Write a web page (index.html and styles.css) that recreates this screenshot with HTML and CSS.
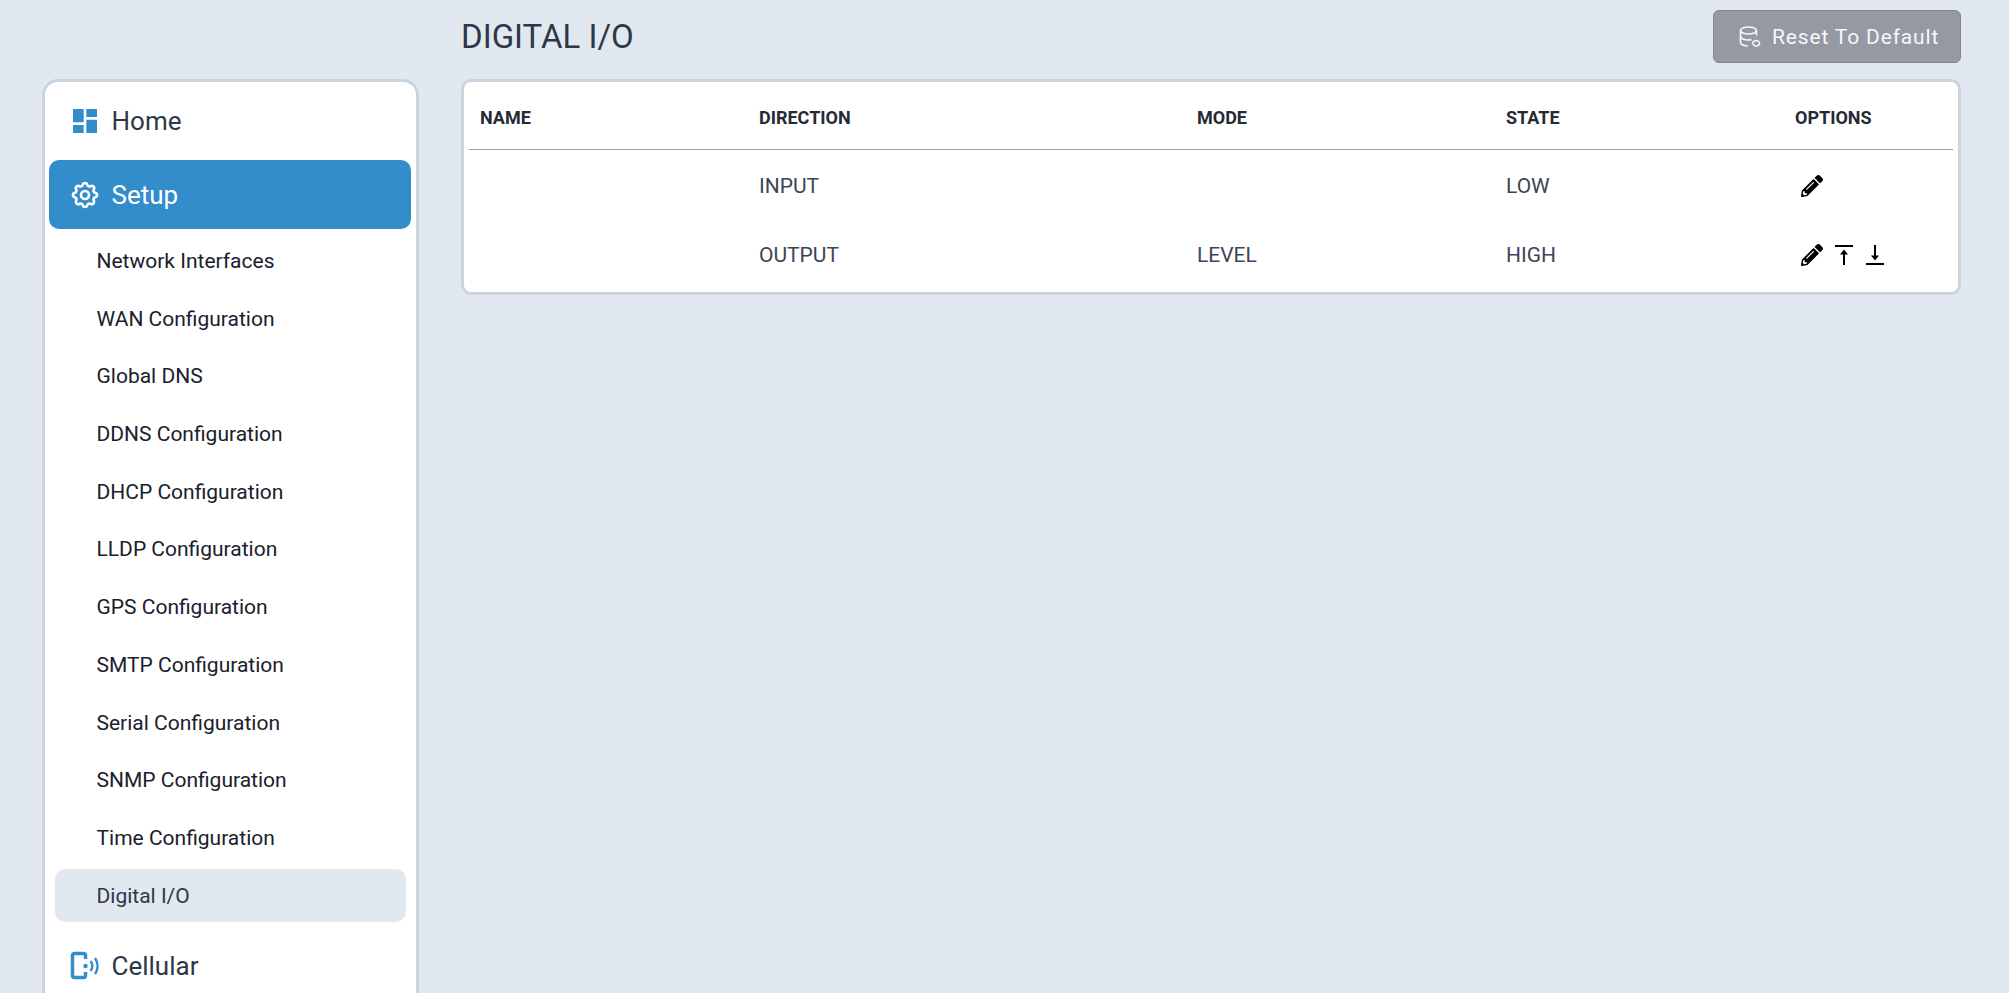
FILE: index.html
```html
<!DOCTYPE html>
<html>
<head>
  <meta charset="UTF-8">
  <title>Digital I/O</title>
  <link rel="stylesheet" href="styles.css">
</head>
<body>
  <div class="page">
    <aside class="sidebar">
      <a class="nav-main" href="#">
        <svg class="nav-icon" viewBox="0 0 24 24" fill="#348dcb"><path d="M3 13h8V3H3v10zm0 8h8v-6H3v6zm10 0h8V11h-8v10zm0-18v6h8V3h-8z"/></svg>
        Home
      </a>
      <a class="nav-main active" href="#">
        <svg class="nav-icon" viewBox="0 0 24 24" fill="none" stroke="#fff" stroke-width="2"><path d="M10.325 4.317c.426-1.756 2.924-1.756 3.35 0a1.724 1.724 0 002.573 1.066c1.543-.94 3.31.826 2.37 2.37a1.724 1.724 0 001.065 2.572c1.756.426 1.756 2.924 0 3.35a1.724 1.724 0 00-1.066 2.573c.94 1.543-.826 3.31-2.37 2.37a1.724 1.724 0 00-2.572 1.065c-.426 1.756-2.924 1.756-3.35 0a1.724 1.724 0 00-2.573-1.066c-1.543.94-3.31-.826-2.37-2.37a1.724 1.724 0 00-1.065-2.572c-1.756-.426-1.756-2.924 0-3.35a1.724 1.724 0 001.066-2.573c-.94-1.543.826-3.31 2.37-2.37.996.608 2.296.07 2.572-1.065z"/><circle cx="12" cy="12" r="3"/></svg>
        Setup
      </a>
      <div class="subnav">
        <a class="nav-sub" href="#">Network Interfaces</a>
        <a class="nav-sub" href="#">WAN Configuration</a>
        <a class="nav-sub" href="#">Global DNS</a>
        <a class="nav-sub" href="#">DDNS Configuration</a>
        <a class="nav-sub" href="#">DHCP Configuration</a>
        <a class="nav-sub" href="#">LLDP Configuration</a>
        <a class="nav-sub" href="#">GPS Configuration</a>
        <a class="nav-sub" href="#">SMTP Configuration</a>
        <a class="nav-sub" href="#">Serial Configuration</a>
        <a class="nav-sub" href="#">SNMP Configuration</a>
        <a class="nav-sub" href="#">Time Configuration</a>
        <a class="nav-sub current" href="#">Digital I/O</a>
      </div>
      <a class="nav-main" href="#">
        <svg class="nav-icon" viewBox="0 0 32 32" fill="none" stroke="#348dcb"><path stroke-width="3.500" d="M16.500 9V5.500A2 2 0 0 0 14.500 3.500H5.500A2 2 0 0 0 3.500 5.500V25.500A2 2 0 0 0 5.500 27.500H14.500A2 2 0 0 0 16.500 25.500V22"/><circle cx="16.500" cy="16" r="2.200" fill="#348dcb" stroke="none"/><path stroke-width="2.500" d="M21.500 11a8 8 0 0 1 0 10M26 8a14 14 0 0 1 0 16"/></svg>
        Cellular
      </a>
    </aside>
    <main class="content">
      <header class="content-head">
        <h1>DIGITAL I/O</h1>
        <button class="reset-btn" type="button">
          <svg class="reset-icon" viewBox="0 0 22 22" fill="none" stroke="currentColor" stroke-width="1.700"><ellipse cx="9.500" cy="4.500" rx="8" ry="3.500"/><path d="M1.500 4.500v12c0 1.900 3.400 3.500 7.500 3.500M17.500 4.500v5M1.500 10.500c0 1.900 3.400 3.500 8 3.500 1 0 2-.1 3-.3"/><path stroke-width="1.500" d="M13.500 18a3.500 3.500 0 0 1 6-2.500l1 1M20.800 16.500a3.500 3.500 0 0 1-6 2.500l-1-1"/></svg>
          Reset To Default
        </button>
      </header>
      <section class="panel">
        <table class="io-table">
          <thead>
            <tr>
              <th class="col-name">NAME</th>
              <th class="col-dir">DIRECTION</th>
              <th class="col-mode">MODE</th>
              <th class="col-state">STATE</th>
              <th>OPTIONS</th>
            </tr>
          </thead>
          <tbody>
            <tr>
              <td></td>
              <td>INPUT</td>
              <td></td>
              <td>LOW</td>
              <td>
                <div class="opts">
                  <svg class="pencil" viewBox="0 0 512 512"><path d="M497.900 142.100l-46.100 46.100c-4.700 4.700-12.300 4.700-17 0l-111-111c-4.700-4.700-4.700-12.300 0-17l46.100-46.100c18.700-18.700 49.100-18.700 67.900 0l60.100 60.100c18.800 18.700 18.800 49.100 0 67.900zM284.200 99.800L21.600 362.400.4 483.900c-2.900 16.400 11.400 30.600 27.800 27.800l121.500-21.300 262.600-262.600c4.700-4.700 4.700-12.300 0-17l-111-111c-4.800-4.700-12.400-4.700-17.100 0zM124.100 339.900c-5.500-5.500-5.500-14.300 0-19.800l154-154c5.500-5.500 14.300-5.500 19.800 0s5.500 14.300 0 19.800l-154 154c-5.500 5.500-14.300 5.500-19.800 0zM88 424h48v36.300l-64.500 11.300-31.100-31.100L51.700 376H88v48z"/></svg>
                </div>
              </td>
            </tr>
            <tr>
              <td></td>
              <td>OUTPUT</td>
              <td>LEVEL</td>
              <td>HIGH</td>
              <td>
                <div class="opts">
                  <svg class="pencil" viewBox="0 0 512 512"><path d="M497.900 142.100l-46.100 46.100c-4.700 4.700-12.300 4.700-17 0l-111-111c-4.700-4.700-4.700-12.300 0-17l46.100-46.100c18.700-18.700 49.100-18.700 67.900 0l60.100 60.100c18.800 18.700 18.800 49.100 0 67.900zM284.200 99.800L21.600 362.400.4 483.900c-2.900 16.400 11.400 30.600 27.800 27.800l121.500-21.300 262.600-262.600c4.700-4.700 4.700-12.300 0-17l-111-111c-4.800-4.700-12.400-4.700-17.100 0zM124.100 339.900c-5.500-5.500-5.500-14.300 0-19.800l154-154c5.500-5.500 14.300-5.500 19.800 0s5.500 14.300 0 19.800l-154 154c-5.500 5.500-14.300 5.500-19.800 0zM88 424h48v36.300l-64.500 11.300-31.100-31.100L51.700 376H88v48z"/></svg>
                  <svg class="arrow" viewBox="0 0 20 20"><path d="M1 0h18v2H1zM9 20V8h2v12z"/><path d="M10 4.500l4 5H6z"/></svg>
                  <svg class="arrow" viewBox="0 0 20 20"><path d="M1 18h18v2H1zM9 0v12h2V0z"/><path d="M10 15.500l4-5H6z"/></svg>
                </div>
              </td>
            </tr>
          </tbody>
        </table>
      </section>
    </main>
  </div>
</body>
</html>
```

FILE: styles.css
```css
html, body {
  margin: 0;
  height: 100%;
  overflow: hidden;
}
body {
  font-family: Roboto, "Liberation Sans", sans-serif;
  background: #e2e8f0;
  color: #2d3748;
}
a {
  color: inherit;
  text-decoration: none;
}
.page {
  display: flex;
  align-items: flex-start;
  gap: 42px;
  padding: 0 48px 0 42px;
}

/* sidebar */
.sidebar {
  flex: none;
  box-sizing: border-box;
  width: 377px;
  margin-top: 79px;
  padding: 4px 5px 3px 4px;
  background: #fff;
  border: 3px solid #cbd5e0;
  border-radius: 16px;
}
.nav-main {
  display: flex;
  align-items: center;
  gap: 10.500px;
  height: 69px;
  margin-bottom: 5px;
  padding-left: 20px;
  border-radius: 10px;
  font-size: 26px;
}
.nav-main.active {
  margin-bottom: 0;
  background: #348dcb;
  color: #fff;
}
.nav-icon {
  width: 32px;
  height: 32px;
  flex: none;
}
.subnav {
  display: flex;
  flex-direction: column;
  gap: 4.700px;
  padding: 5px 5px 10px 6px;
}
.nav-sub {
  display: flex;
  align-items: center;
  box-sizing: border-box;
  height: 53px;
  padding: 1px 0 0 41.500px;
  border-radius: 10px;
  font-size: 21px;
  color: #1a202c;
}
.nav-sub.current {
  background: #e2e8f0;
  color: #2d3748;
}

/* content */
.content {
  flex: 1;
  min-width: 0;
}
.content-head {
  display: flex;
  align-items: center;
  justify-content: space-between;
  height: 79px;
  padding-bottom: 6px;
  box-sizing: border-box;
}
h1 {
  margin: 0;
  font-size: 33px;
  font-weight: 400;
}
.reset-btn {
  display: flex;
  align-items: center;
  gap: 11px;
  box-sizing: border-box;
  width: 248px;
  height: 53px;
  padding: 0 0 0 25px;
  background: #9599a3;
  border: 1px solid #80858f;
  border-radius: 6px;
  color: #f5f7fa;
  font-family: inherit;
  font-size: 21px;
  letter-spacing: 0.85px;
}
.reset-icon {
  width: 22px;
  height: 22px;
  flex: none;
}
.panel {
  box-sizing: border-box;
  height: 216px;
  padding: 0 5px;
  background: #fff;
  border: 3px solid #cbd5e0;
  border-radius: 10px;
}
.io-table {
  width: 100%;
  border-collapse: separate;
  border-spacing: 0;
}
.io-table th {
  height: 68px;
  padding: 4px 0 0 11px;
  box-sizing: border-box;
  text-align: left;
  font-size: 18px;
  font-weight: 700;
  color: #262a36;
  border-bottom: 1px solid #9a9fa8;
}
.io-table td {
  height: 69px;
  padding: 3px 0 0 11px;
  box-sizing: border-box;
  font-size: 21px;
  color: #3d4555;
}
.col-name { width: 279px; }
.col-dir { width: 438px; }
.col-mode { width: 309px; }
.col-state { width: 289px; }
.opts {
  display: flex;
  align-items: center;
  gap: 11px;
  padding-left: 6px;
}
.pencil {
  width: 22px;
  height: 22px;
}
.arrow {
  width: 20px;
  height: 20px;
}
```
